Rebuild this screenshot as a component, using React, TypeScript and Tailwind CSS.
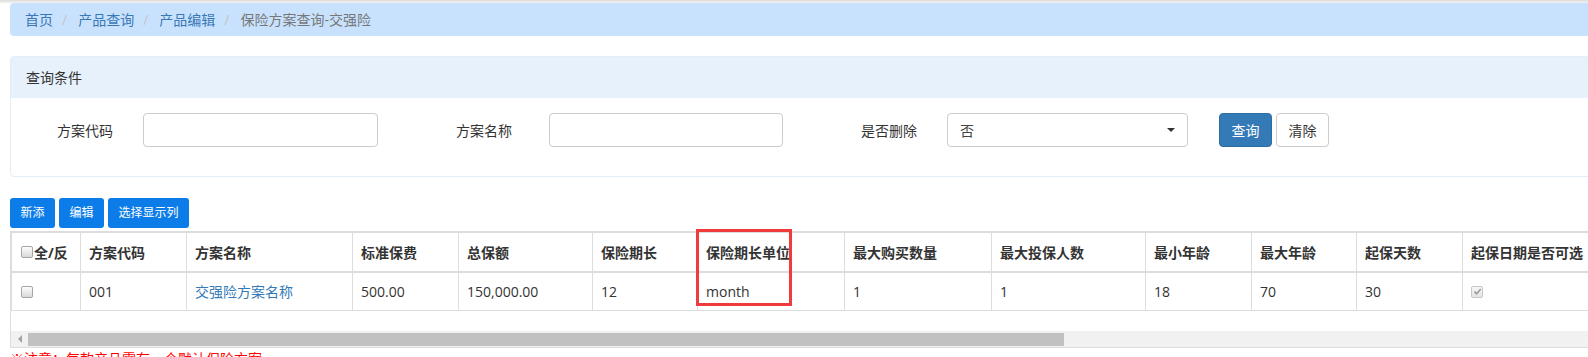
import React from 'react';

const COLUMNS = [
  { title: '方案代码', w: 'w-[106px]', value: '001' },
  { title: '方案名称', w: 'w-[166px]', value: '交强险方案名称', link: true },
  { title: '标准保费', w: 'w-[106px]', value: '500.00' },
  { title: '总保额', w: 'w-[134px]', value: '150,000.00' },
  { title: '保险期长', w: 'w-[105px]', value: '12' },
  { title: '保险期长单位', w: 'w-[147px]', value: 'month' },
  { title: '最大购买数量', w: 'w-[147px]', value: '1' },
  { title: '最大投保人数', w: 'w-[154px]', value: '1' },
  { title: '最小年龄', w: 'w-[106px]', value: '18' },
  { title: '最大年龄', w: 'w-[105px]', value: '70' },
  { title: '起保天数', w: 'w-[106px]', value: '30' },
  { title: '起保日期是否可选', w: 'w-[220px]', value: null },
];

function CheckBox({ checked = false, disabled = false }: { checked?: boolean; disabled?: boolean }) {
  return (
    <span
      className={
        disabled
          ? 'inline-flex w-[12px] h-[12px] shrink-0 items-center justify-center rounded-[2px] border border-[#c6c6c6] bg-linear-to-b from-[#f7f7f7] to-[#e4e4e4]'
          : 'inline-flex w-[12px] h-[12px] shrink-0 items-center justify-center rounded-[2px] border border-[#a6a6a6] bg-linear-to-b from-[#fdfdfd] to-[#d9d9d9]'
      }
    >
      {checked && (
        <svg width="9" height="9" viewBox="0 0 10 10">
          <path d="M1.5 5.2 L4 7.6 L8.6 2.2" fill="none" stroke="#9b9b9b" strokeWidth="1.8" />
        </svg>
      )}
    </span>
  );
}

export default function App() {
  return (
    <div className="relative w-[1588px] h-[357px] overflow-hidden bg-white text-[14px] text-[#333] font-['Open_Sans','Noto_Sans_CJK_SC',sans-serif]">
      {/* top shadow strip */}
      <div className="h-[3px] bg-linear-to-b from-[#dcdcdc] to-[#f3f3f3]" />

      {/* Breadcrumb */}
      <div className="ml-[10px] w-[1600px] h-[33px] flex items-center pl-[15px] bg-[#c8e2fe] rounded-[4px]">
        <span className="text-[#3a78b5]">首页</span>
        <span className="ml-[9px] mr-[11px] text-[#c4c4c4]">/</span>
        <span className="text-[#3a78b5]">产品查询</span>
        <span className="ml-[9px] mr-[11px] text-[#c4c4c4]">/</span>
        <span className="text-[#3a78b5]">产品编辑</span>
        <span className="ml-[9px] mr-[11px] text-[#c4c4c4]">/</span>
        <span className="text-[#777]">保险方案查询-交强险</span>
      </div>

      {/* Query panel */}
      <div className="mt-[20px] ml-[10px] w-[1600px] border border-[#e3edf9] rounded-[4px]">
        <div className="h-[41px] flex items-center pl-[15px] bg-[#e7f1fc]">查询条件</div>
        <div className="flex items-center pt-[15px] pb-[29px]">
          <label className="w-[102px] text-right">方案代码</label>
          <div className="ml-[30px] w-[235px] h-[34px] border border-[#ccc] rounded-[4px]" />
          <label className="w-[134px] text-right">方案名称</label>
          <div className="ml-[37px] w-[234px] h-[34px] border border-[#ccc] rounded-[4px]" />
          <label className="w-[134px] text-right">是否删除</label>
          <div className="ml-[30px] w-[241px] h-[34px] flex items-center justify-between px-[12px] border border-[#ccc] rounded-[4px] text-[#444]">
            <span>否</span>
            <span className="w-0 h-0 border-x-[4px] border-x-transparent border-t-[4px] border-t-[#333]" />
          </div>
          <button className="ml-[31px] w-[53px] h-[34px] rounded-[4px] bg-[#337ab7] border border-[#2e6da4] text-white">查询</button>
          <button className="ml-[4px] w-[53px] h-[34px] rounded-[4px] bg-white border border-[#ccc] text-[#333]">清除</button>
        </div>
      </div>

      {/* Toolbar */}
      <div className="mt-[21px] ml-[10px] flex gap-[4px] text-[12px] text-white">
        <button className="w-[45px] h-[30px] rounded-[3px] bg-[#0b7ce8]">新添</button>
        <button className="w-[45px] h-[30px] rounded-[3px] bg-[#0b7ce8]">编辑</button>
        <button className="w-[81px] h-[30px] rounded-[3px] bg-[#0b7ce8]">选择显示列</button>
      </div>

      {/* Table */}
      <div className="mt-[3px] ml-[10px] w-[1700px] border border-[#ddd]">
        <div className="border-l border-t border-[#ddd]">
          <div className="flex h-[40px] border-b-2 border-[#ddd] font-bold">
            <div className="w-[69px] shrink-0 flex items-center pl-[9px] border-r border-[#ddd]">
              <CheckBox />
              <span className="ml-[1px]">全/反</span>
            </div>
            {COLUMNS.map((c) => (
              <div key={c.title} className={`${c.w} shrink-0 flex items-center pl-[8px] border-r border-[#ddd]`}>
                {c.title}
              </div>
            ))}
          </div>
          <div className="flex h-[38px] border-b border-[#ddd]">
            <div className="w-[69px] shrink-0 flex items-center pl-[9px] border-r border-[#ddd]">
              <CheckBox />
            </div>
            {COLUMNS.map((c) => (
              <div key={c.title} className={`${c.w} shrink-0 flex items-center pl-[8px] border-r border-[#ddd]`}>
                {c.value === null ? (
                  <CheckBox checked disabled />
                ) : c.link ? (
                  <span className="text-[#337ab7]">{c.value}</span>
                ) : (
                  c.value
                )}
              </div>
            ))}
          </div>
        </div>
        <div className="h-[20px]" />
        {/* horizontal scrollbar */}
        <div className="h-[16px] flex bg-[#f1f1f1]">
          <div className="w-[17px] flex items-center justify-center">
            <span className="w-0 h-0 border-y-[4px] border-y-transparent border-r-[4px] border-r-[#a3a3a3]" />
          </div>
          <div className="mt-[2px] w-[1036px] h-[13px] bg-[#c1c1c1]" />
        </div>
      </div>

      <div className="mt-[1px] ml-[10px] text-[#ff0000] leading-[20px]">※注意：每款产品需有一个默认保险方案</div>

      {/* annotation box */}
      <div className="absolute left-[696px] top-[229px] w-[96px] h-[77px] border-[3px] border-[#ef3b3b]" />
    </div>
  );
}
